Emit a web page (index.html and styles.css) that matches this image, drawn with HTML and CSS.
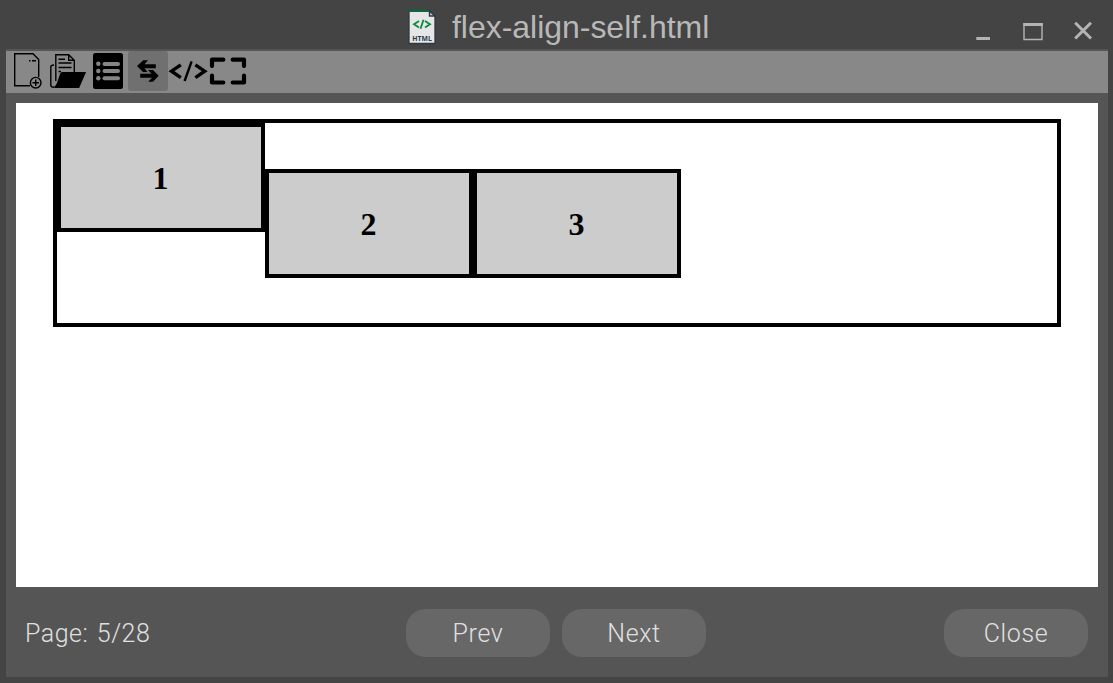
FILE: index.html
```html
<!DOCTYPE html>
<html lang="en">
<head>
<meta charset="utf-8">
<title>flex-align-self.html</title>
<link rel="stylesheet" href="styles.css">
</head>
<body>
<div class="window">
  <header class="titlebar">
    <span></span>
    <div class="title">
      <svg class="file-icon" width="28" height="36" viewBox="0 0 28 36">
        <path d="M1 1.500H21.500L27 7V34.500H1Z" fill="#e6e6e6" stroke="#2b3a48" stroke-width="1.300"/>
        <path d="M.5.500H21v2.500H.5Z" fill="#13653e"/>
        <path d="M21.500 2v5H27Z" fill="#c8ced2" stroke="#2b3a48" stroke-width="1.400"/>
        <path d="M11 12 6 15.300 11 18.500M17 12l5 3.300L17 18.500M15.500 10.800l-3 9" fill="none" stroke="#0a8a3c" stroke-width="1.800"/>
        <text class="file-type" x="14" y="32" text-anchor="middle" textLength="19.500" lengthAdjust="spacingAndGlyphs">HTML</text>
      </svg>
      <span class="title-text">flex-align-self.html</span>
    </div>
    <div class="controls">
      <svg width="50" height="49" viewBox="0 0 50 49"><path d="M18.300 38.500H32" stroke="#b4b4b4" stroke-width="3"/></svg>
      <svg width="50" height="49" viewBox="0 0 50 49"><path d="M16 23V39.500H34V23" fill="none" stroke="#b4b4b4" stroke-width="1.400"/><path d="M15.300 24.500H34.700" stroke="#b4b4b4" stroke-width="3"/></svg>
      <svg width="50" height="49" viewBox="0 0 50 49"><path d="M17.200 22.700 33 38.500M33 22.700 17.200 38.500" stroke="#b4b4b4" stroke-width="3"/></svg>
    </div>
  </header>
  <main class="panel">
    <nav class="toolbar">
      <span class="tool"><svg width="40" height="40" viewBox="0 0 40 40" fill="none" stroke="#000" stroke-width="1.400">
        <path d="M22 34.700H6.700V2.700H25L30.700 8.500V26M21 9.700H22.500M24 9.700H28"/>
        <circle cx="27.700" cy="31.700" r="5.300"/><path d="M24.500 31.700h6.400M27.700 28.500v6.400"/></svg></span>
      <span class="tool"><svg width="40" height="40" viewBox="0 0 40 40" fill="none" stroke="#000" stroke-width="1.400">
        <path d="M7.800 30V3.700H20.700L26.300 9.300V21M20.700 4V9.300H26M10.500 8.300H17M10.500 12H23.500M10.500 16.500H23.500M10.500 20.500H13"/>
        <path d="M6 14Q2.800 14 2.800 16V34Q2.800 36.300 6 36.300"/>
        <path d="M14.500 21.700H37L30.700 36.300H6.500Q9 35 10.300 30.500L12.500 23.500Q13 21.700 14.500 21.700Z" fill="#000"/></svg></span>
      <span class="tool"><svg width="40" height="40" viewBox="0 0 40 40">
        <rect x="5" y="2" width="30" height="36" rx="2.500"/>
        <g fill="#858585"><circle cx="10.300" cy="12.800" r="2.200"/><circle cx="10.300" cy="20" r="2.200"/><circle cx="10.300" cy="27.300" r="2.200"/>
        <rect x="14.500" y="11" width="17.500" height="4" rx="2"/><rect x="14.500" y="18" width="17.500" height="4" rx="2"/><rect x="14.500" y="25.300" width="17.500" height="4" rx="2"/></g></svg></span>
      <span class="tool active"><svg width="40" height="40" viewBox="0 0 40 40">
        <path d="M9 15 15.300 9.200H20L16.500 13.300H27.800V17.200H16.500L19.500 21H15Z"/>
        <path d="M30.700 24.800 25 30.800H20.200L24 26.700H12.200V22.800H23.500L20 19H25Z"/></svg></span>
      <span class="tool"><svg width="40" height="40" viewBox="0 0 40 40" fill="none" stroke="#000">
        <path d="M12.800 13.800 3.500 20.200l9.300 6.400M27.400 13.800l9.300 6.400-9.300 6.400" stroke-width="3.400"/><path d="M23.600 10.300 16.600 30" stroke-width="2.400"/></svg></span>
      <span class="tool"><svg width="40" height="40" viewBox="0 0 40 40" fill="none" stroke="#000" stroke-width="4.200" stroke-linecap="round" stroke-linejoin="round">
        <path d="M4 15V8.700H15.300M24.700 8.700H36V15M36 24.700V31.500H24.700M15.300 31.500H4V24.700"/></svg></span>
    </nav>
    <section class="page">
      <div class="flex-demo">
        <div class="item first">1</div>
        <div class="item">2</div>
        <div class="item">3</div>
      </div>
    </section>
    <footer class="footer">
      <span class="page-label">Page: 5/28</span>
      <div class="pager"><button class="btn">Prev</button><button class="btn">Next</button></div>
      <button class="btn close">Close</button>
    </footer>
  </main>
</div>
</body>
</html>
```
FILE: styles.css
```css
* { box-sizing: border-box; }
body { margin: 0; background: #444; }
.window { width: 1113px; height: 683px; padding: 0 5px 6px 6px; background: #444; display: flex; flex-direction: column; overflow: hidden; }
.titlebar { height: 49px; display: grid; grid-template-columns: 402px 1fr 150px; }
.title { display: flex; align-items: flex-start; color: #b8b8b8; }
.file-icon { margin-top: 9px; flex: none; }
.file-type { font: bold 7.5px "Open Sans", sans-serif; fill: #2b3a48; }
.title-text { margin-left: 16px; font: 32px/37px "Liberation Sans", sans-serif; letter-spacing: -.03px; margin-top: 9px; white-space: nowrap; }
.controls { display: flex; }
.panel { flex: 1; background: #555; padding-top: 2px; display: flex; flex-direction: column; }
.toolbar { height: 42px; background: #888; padding-left: 2px; display: flex; }
.tool { width: 40px; height: 40px; border-radius: 3px; }
.tool svg { display: block; }
.tool.active { background: #707070; }
.page { height: 484px; margin: 10px 10px 0; padding: 16px 37px; background: #fff; }
.flex-demo { width: 1008px; height: 208px; border: 4px solid #000; display: flex; align-items: center; }
.item { width: 208px; height: 109px; border: 4px solid #000; background: #ccc; padding: 2px 1px 0 0; display: flex; justify-content: center; align-items: center; font: bold 32px/37px "Liberation Serif", serif; color: #000; }
.item.first { align-self: flex-start; }
.footer { flex: 1; padding: 22px 20px 0 19px; display: grid; grid-template-columns: 381px 1fr 144px; align-items: start; font: 300 25px/48px Roboto, sans-serif; color: #e0e0e0; }
.page-label { letter-spacing: .5px; word-spacing: 2px; padding-top: 1px; }
.pager { display: flex; gap: 12px; }
.btn { width: 144px; height: 48px; padding: 2px 0 0; border: 0; border-radius: 20px; background: #676767; color: inherit; font: inherit; line-height: 46px; letter-spacing: .6px; }
```
